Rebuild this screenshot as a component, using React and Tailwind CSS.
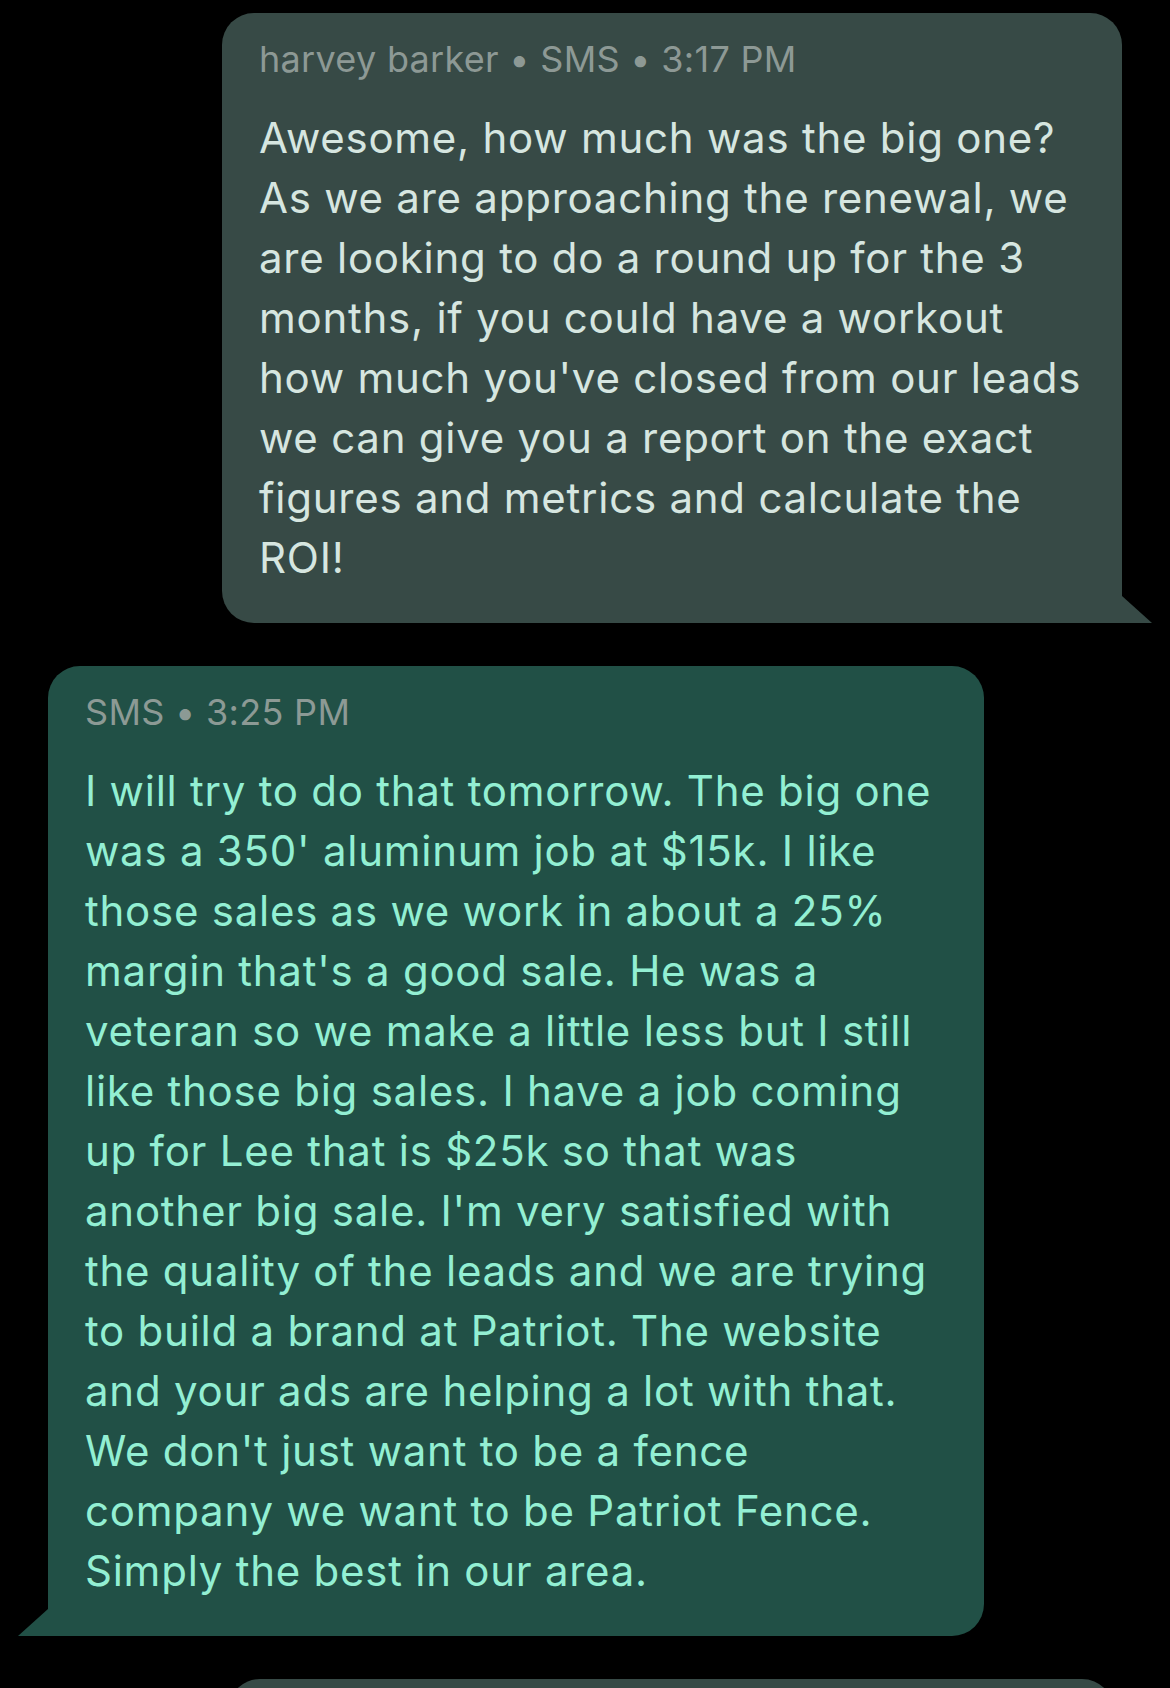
const incoming = [
  "Awesome, how much was the big one?",
  "As we are approaching the renewal, we",
  "are looking to do a round up for the 3",
  "months, if you could have a workout",
  "how much you've closed from our leads",
  "we can give you a report on the exact",
  "figures and metrics and calculate the",
  "ROI!",
];

const outgoing = [
  "I will try to do that tomorrow. The big one",
  "was a 350' aluminum job at $15k. I like",
  "those sales as we work in about a 25%",
  "margin that's a good sale. He was a",
  "veteran so we make a little less but I still",
  "like those big sales. I have a job coming",
  "up for Lee that is $25k so that was",
  "another big sale. I'm very satisfied with",
  "the quality of the leads and we are trying",
  "to build a brand at Patriot. The website",
  "and your ads are helping a lot with that.",
  "We don't just want to be a fence",
  "company we want to be Patriot Fence.",
  "Simply the best in our area.",
];

export default function App() {
  const font = { fontFamily: "Inter, 'Noto Sans', sans-serif" };

  return (
    <div className="h-[1688px] bg-black overflow-hidden" style={font}>
      <div className="flex flex-col pt-[13px]">
        {/* Incoming message */}
        <div className="relative self-end mr-[48px] w-[900px] rounded-[32px] rounded-br-none bg-[#374a46] px-[37px] pt-[26px] pb-[35px]">
          <div className="text-[36px] leading-[40px] text-[#8d9995] tracking-[0.3px]">
            harvey barker • SMS • 3:17 PM
          </div>
          <div className="mt-[29px] text-[42px] leading-[60px] text-[#d6e6e0] tracking-[0.75px] whitespace-nowrap">
            {incoming.map((line) => (
              <div key={line}>{line}</div>
            ))}
          </div>
          <svg
            className="absolute right-[-30px] bottom-0"
            width="30"
            height="27"
            viewBox="0 0 30 27"
          >
            <polygon points="0,0 30,27 0,27" fill="#374a46" />
          </svg>
        </div>

        {/* Outgoing message */}
        <div className="relative self-start ml-[48px] mt-[43px] w-[936px] rounded-[32px] rounded-bl-none bg-[#215046] px-[37px] pt-[26px] pb-[35px]">
          <div className="text-[36px] leading-[40px] text-[#8c9a95] tracking-[0.3px]">
            SMS • 3:25 PM
          </div>
          <div className="mt-[29px] text-[42px] leading-[60px] text-[#93efd3] tracking-[0.75px] whitespace-nowrap">
            {outgoing.map((line) => (
              <div key={line}>{line}</div>
            ))}
          </div>
          <svg
            className="absolute left-[-30px] bottom-0"
            width="30"
            height="27"
            viewBox="0 0 30 27"
          >
            <polygon points="30,0 0,27 30,27" fill="#215046" />
          </svg>
        </div>

        {/* Next message, cut off */}
        <div className="self-end mr-[56px] mt-[43px] w-[886px] h-[80px] shrink-0 rounded-[32px] bg-[#374a46]" />
      </div>
    </div>
  );
}
